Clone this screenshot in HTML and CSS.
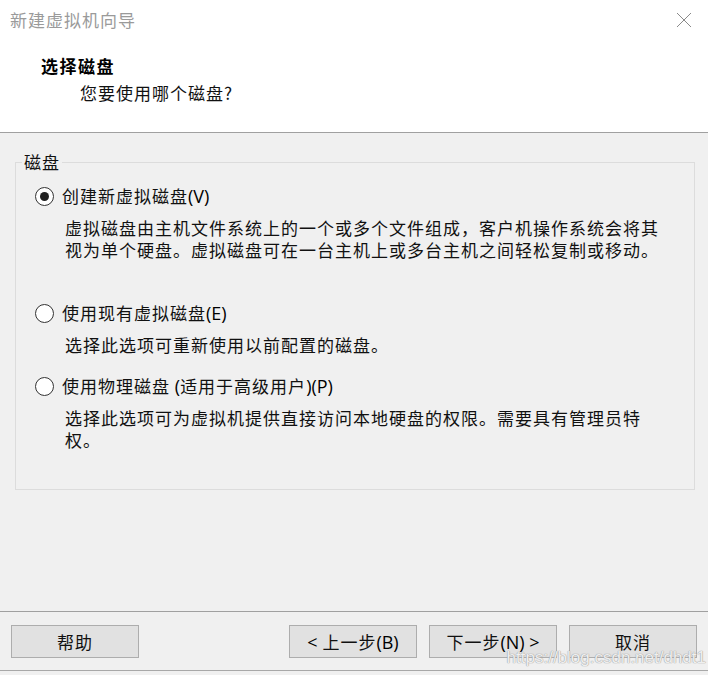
FILE: index.html
```html
<!DOCTYPE html>
<html lang="zh-CN">
<head>
    <meta charset="UTF-8">
    <title>新建虚拟机向导</title>
    <link rel="stylesheet" href="styles.css">
</head>
<body>
    <div class="window">
        <!-- En-tête blanc -->
        <div class="top">
            <div class="titlebar">
                <span class="title">新建虚拟机向导</span>
                <svg class="close" width="16" height="16" viewBox="0 0 16 16">
                    <path d="M1 1 L15 15 M15 1 L1 15" stroke="#8a8a8a" stroke-width="1" fill="none"/>
                </svg>
            </div>
            <div class="heading">选择磁盘</div>
            <div class="subheading">您要使用哪个磁盘?</div>
        </div>

        <!-- Choix du disque -->
        <div class="content">
            <fieldset class="group">
                <legend>磁盘</legend>
                <div class="options">
                    <div class="option first">
                        <span class="radio checked"></span>
                        <span>创建新虚拟磁盘<span class="latin">(V)</span></span>
                    </div>
                    <p class="desc">虚拟磁盘由主机文件系统上的一个或多个文件组成，客户机操作系统会将其<br>视为单个硬盘。虚拟磁盘可在一台主机上或多台主机之间轻松复制或移动。</p>

                    <div class="option second">
                        <span class="radio"></span>
                        <span>使用现有虚拟磁盘<span class="latin">(E)</span></span>
                    </div>
                    <p class="desc">选择此选项可重新使用以前配置的磁盘。</p>

                    <div class="option third">
                        <span class="radio"></span>
                        <span>使用物理磁盘 <span class="latin">(</span>适用于高级用户<span class="latin">)(P)</span></span>
                    </div>
                    <p class="desc">选择此选项可为虚拟机提供直接访问本地硬盘的权限。需要具有管理员特<br>权。</p>
                </div>
            </fieldset>
        </div>

        <!-- Boutons -->
        <div class="footer">
            <button class="btn">帮助</button>
            <div class="spacer"></div>
            <button class="btn"><span class="latin">&lt;</span> 上一步<span class="latin">(B)</span></button>
            <button class="btn">下一步<span class="latin">(N) &gt;</span></button>
            <button class="btn">取消</button>
            <span class="watermark">https://blog.csdn.net/dhdt1</span>
        </div>
    </div>
</body>
</html>
```

FILE: styles.css
```css
body {
    margin: 0;
    background: #f0f0f0;
    font-family: "Noto Sans CJK SC", "Noto Sans", sans-serif;
    font-size: 17px;
    color: #111;
}
.window {
    width: 708px;
    height: 675px;
    display: flex;
    flex-direction: column;
    overflow: hidden;
}
.top {
    background: #fff;
    height: 132px;
    border-bottom: 1px solid #a0a0a0;
    box-sizing: content-box;
}
.titlebar {
    display: flex;
    align-items: center;
    justify-content: space-between;
    height: 40px;
    padding: 0 16px 0 10px;
}
.title {
    color: #9a9a9a;
    letter-spacing: 1px;
    line-height: 22px;
}
.close {
    display: block;
    margin-top: -1px;
}
.heading {
    margin: 15px 0 0 41px;
    line-height: 22px;
    font-weight: bold;
    color: #000;
    letter-spacing: 1.5px;
}
.subheading {
    margin: 5px 0 0 80px;
    line-height: 22px;
    letter-spacing: 1px;
}
.content {
    padding: 18px 13px 0 15px;
}
.group {
    margin: 0;
    padding: 0 0 38px 0;
    border: 1px solid #dcdcdc;
    min-width: 0;
}
.group legend {
    margin-left: 6px;
    padding: 0 2px;
    line-height: 22px;
    letter-spacing: 1px;
}
.options {
    padding-left: 19px;
}
.option {
    display: flex;
    align-items: center;
    gap: 8px;
    line-height: 22px;
    letter-spacing: 1px;
}
.option.first {
    margin-top: 12px;
}
.option.second {
    margin-top: 41px;
}
.option.third {
    margin-top: 19px;
}
.radio {
    width: 19px;
    height: 19px;
    border: 1.5px solid #333;
    border-radius: 50%;
    background: #fff;
    box-sizing: border-box;
    display: flex;
    align-items: center;
    justify-content: center;
    flex: none;
}
.radio.checked::after {
    content: "";
    width: 9px;
    height: 9px;
    border-radius: 50%;
    background: #222;
}
.latin {
    font-family: "Open Sans", "Noto Sans", sans-serif;
    font-size: 18px;
    font-weight: 500;
    letter-spacing: 0;
    color: #000;
}
.desc {
    margin: 10px 0 0 30px;
    line-height: 22px;
    letter-spacing: 1px;
}
.footer {
    margin-top: auto;
    margin-bottom: 4px;
    position: relative;
    display: flex;
    align-items: center;
    gap: 12px;
    padding: 13px 11px 12px;
    border-top: 1px solid #a0a0a0;
    border-bottom: 1px solid #a8a8a8;
}
.spacer {
    flex: 1;
}
.btn {
    width: 128px;
    height: 33px;
    padding: 0;
    background: #e1e1e1;
    border: 1px solid #adadad;
    font-family: inherit;
    font-size: 17px;
    color: #111;
    letter-spacing: 1px;
}
.watermark {
    position: absolute;
    right: 2px;
    bottom: 2px;
    font-family: "Liberation Sans", sans-serif;
    font-size: 17px;
    color: rgba(255, 255, 255, 0.85);
    text-shadow: 0 0 1px #9a9a9a, 0 0 1px #9a9a9a;
    pointer-events: none;
}
```
